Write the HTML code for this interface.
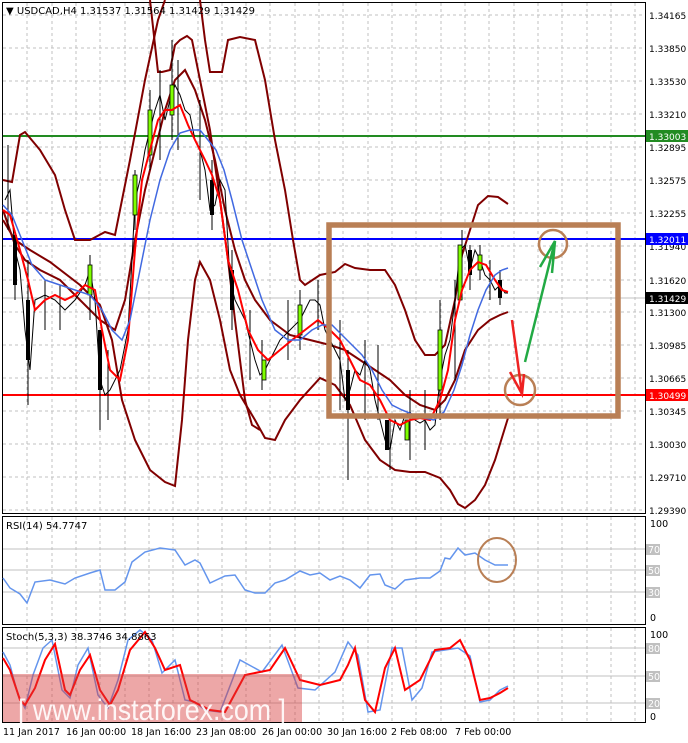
<!DOCTYPE html>
<html><head><meta charset="utf-8"><style>
html,body{margin:0;padding:0;background:#fff;}
svg{display:block;font-family:Tahoma,"DejaVu Sans",sans-serif;}
</style></head><body>
<svg width="688" height="743" viewBox="0 0 688 743" xmlns="http://www.w3.org/2000/svg">
<rect width="688" height="743" fill="#fff"/>
<g stroke="#c0c0c0" stroke-dasharray="3,3" stroke-width="1">
<path d="M27 3V513M52 3V513M76 3V513M100 3V513M125 3V513M149 3V513M173 3V513M198 3V513M222 3V513M246 3V513M270 3V513M295 3V513M319 3V513M343 3V513M368 3V513M392 3V513M416 3V513M441 3V513M465 3V513M489 3V513M514 3V513M538 3V513M562 3V513M587 3V513M611 3V513M635 3V513"/>
<path d="M27 517V624M52 517V624M76 517V624M100 517V624M125 517V624M149 517V624M173 517V624M198 517V624M222 517V624M246 517V624M270 517V624M295 517V624M319 517V624M343 517V624M368 517V624M392 517V624M416 517V624M441 517V624M465 517V624M489 517V624M514 517V624M538 517V624M562 517V624M587 517V624M611 517V624M635 517V624"/>
<path d="M27 628V722M52 628V722M76 628V722M100 628V722M125 628V722M149 628V722M173 628V722M198 628V722M222 628V722M246 628V722M270 628V722M295 628V722M319 628V722M343 628V722M368 628V722M392 628V722M416 628V722M441 628V722M465 628V722M489 628V722M514 628V722M538 628V722M562 628V722M587 628V722M611 628V722M635 628V722"/>
<path d="M3 15H645M3 48H645M3 81H645M3 114H645M3 147H645M3 180H645M3 213H645M3 246H645M3 280H645M3 312H645M3 345H645M3 378H645M3 411H645M3 444H645M3 477H645M3 510H645"/>
</g>
<g fill="none" stroke="#000" stroke-width="1">
<rect x="2.5" y="2.5" width="643" height="511"/>
<rect x="2.5" y="516.5" width="643" height="108"/>
<rect x="2.5" y="627.5" width="643" height="95"/>
</g>
<g stroke="#c0c0c0" stroke-width="1">
<path d="M3 549H645M3 570H645M3 592H645"/>
<path d="M3 648H645M3 676H645M3 703H645"/>
</g>
<path d="M3 136H645" stroke="#228b22" stroke-width="2"/>
<path d="M3 239H645" stroke="#0000ff" stroke-width="2"/>
<path d="M3 395H645" stroke="#ff0000" stroke-width="2"/>
<path d="M3 298H645" stroke="#c0c0c0" stroke-width="1"/>
<g fill="none" stroke="#800000" stroke-width="2">
<polyline points="3,180 12,182 20,135 25,132 40,150 55,175 65,210 75,240 90,240 105,232 115,235 130,160 145,80 158,20 165,0"/>
<polyline points="150,0 158,72 162,72 170,70 175,45 180,40 187,36 192,40 200,80 210,130 220,200 228,260 235,320 245,400 252,425 260,430"/>
<polyline points="200,0 205,40 210,72 222,72 228,40 240,37 255,40 265,80 275,140 285,190 293,240 300,280 305,285 320,275 335,272 345,264 355,268 370,270 385,270 395,285 405,310 415,340 425,355 435,355 445,345 455,300 462,255 470,230 478,205 488,196 498,197 508,204"/>
<polyline points="3,220 15,240 30,250 50,262 80,285 100,305 112,340 122,400 135,440 150,470 165,482 175,486 182,420 188,340 195,280 200,262 210,280 220,320 230,370 240,395 255,420 265,438 275,440 285,420 300,400 320,378 335,385 350,405 365,440 380,460 395,470 410,472 425,472 440,478 450,490 458,504 465,508 475,500 485,485 495,460 508,418"/>
<polyline points="3,210 15,245 25,260 40,270 60,280 80,300 100,320 115,330 125,300 135,240 145,190 155,150 165,110 175,80 185,70 195,90 205,120 215,160 225,210 235,250 245,280 255,300 270,320 290,335 310,340 330,345 345,350 360,360 375,370 390,380 405,395 420,405 435,410 445,400 455,380 465,350 478,330 490,320 500,315 508,312"/>
</g>
<g stroke="#000" stroke-width="1" fill="none">
<polyline points="5,200 10,190 15,250 20,270 25,330 30,370 35,300 45,295 55,300 65,310 75,300 85,285 90,270 95,300 100,380 105,395 110,390 120,370 128,330 132,260 135,200 140,180 145,150 150,130 155,110 160,95 165,120 170,100 175,85 180,95 185,110 190,115 195,140 200,150 205,170 210,210 215,205 220,180 225,190 230,280 235,300 240,310 245,320 250,340 255,360 260,375 265,370 270,360 280,340 290,330 300,320 305,310 310,300 315,300 320,305 325,330 330,340 335,350 340,360 345,400 350,390 355,370 360,375 365,360 370,370 375,400 380,420 385,440 390,450 395,420 400,430 405,415 410,412 415,420 420,423 425,420 430,430 435,425 440,380 445,355 450,340 455,300 460,250 465,245 470,270 475,250 480,260 485,275 490,280 495,290 500,285 505,293 508,293"/>
</g>
<g stroke="#000" stroke-width="1">
<path d="M8 145V230M15 230V300M28 260V405M45 280V330M60 285V330M90 255V320M100 360V430M108 350V420M135 170V230M150 90V170M160 70V160M172 40V140M178 60V150M200 100V200M212 160V230M232 250V330M250 310V380M262 340V390M288 300V360M300 290V350M318 280V330M340 320V410M348 350V480M365 340V420M378 345V420M390 420V470M410 390V460M425 390V450M440 300V420M455 280V380M462 230V300M470 245V290M480 245V280M490 260V300M500 270V305"/>
</g>
<g fill="#7fff00" stroke="#000" stroke-width="0.8">
<rect x="133" y="175" width="4" height="40"/><rect x="148" y="110" width="4" height="45"/><rect x="170" y="85" width="4" height="30"/><rect x="88" y="265" width="4" height="30"/><rect x="298" y="305" width="4" height="30"/><rect x="438" y="330" width="4" height="60"/><rect x="458" y="245" width="4" height="55"/><rect x="478" y="255" width="4" height="15"/><rect x="405" y="420" width="4" height="20"/><rect x="262" y="360" width="4" height="20"/>
</g>
<g fill="#000">
<rect x="13" y="235" width="4" height="50"/><rect x="26" y="300" width="4" height="60"/><rect x="98" y="330" width="4" height="60"/><rect x="210" y="180" width="4" height="35"/><rect x="230" y="270" width="4" height="40"/><rect x="346" y="370" width="4" height="40"/><rect x="385" y="420" width="4" height="30"/><rect x="468" y="250" width="4" height="25"/><rect x="498" y="280" width="4" height="18"/>
</g>
<polyline fill="none" stroke="#ff0000" stroke-width="2" points="3,210 10,215 20,250 28,280 35,310 45,300 55,295 65,300 75,295 85,285 95,290 102,330 110,370 120,380 128,340 135,250 142,180 150,150 158,120 165,110 172,110 180,105 188,125 195,140 205,160 212,175 220,200 228,260 238,290 248,330 258,350 268,360 280,350 292,340 305,330 318,320 330,330 340,340 350,360 360,380 370,385 380,400 390,420 400,425 410,420 420,418 430,420 440,400 448,370 455,320 462,290 470,270 478,262 486,265 495,280 502,290 508,292"/>
<polyline fill="none" stroke="#4169e1" stroke-width="1.5" points="3,205 12,215 22,240 32,265 45,280 60,285 75,290 90,295 102,310 112,330 122,340 130,320 140,270 150,220 160,180 170,150 180,133 190,130 200,130 208,140 216,150 224,170 232,200 242,240 252,270 262,300 275,330 288,340 300,340 312,330 322,325 332,325 342,335 352,345 362,355 372,370 382,390 392,405 402,410 414,415 424,418 434,420 444,412 454,390 462,365 470,335 478,310 486,290 495,275 502,270 508,268"/>
<rect x="329" y="225" width="289" height="191" fill="none" stroke="#b97f55" stroke-width="5.5"/>
<circle cx="553" cy="244" r="14" fill="none" stroke="#b97f55" stroke-width="2.5"/>
<circle cx="520" cy="390" r="15" fill="none" stroke="#b97f55" stroke-width="2.5"/>
<g stroke="#22aa44" stroke-width="2.5" fill="none"><path d="M525 362L555 241M540 267L555 241L552 273"/></g>
<g stroke="#ee2222" stroke-width="2.5" fill="none"><path d="M512 320L522 394M510 372L522 394L524 374"/></g>
<polyline fill="none" stroke="#6495ed" stroke-width="1.5" points="3,578 10,588 20,594 27,603 35,582 50,580 65,584 75,578 90,573 100,570 105,590 115,590 125,582 132,562 145,552 160,548 175,550 185,565 195,560 200,563 210,583 225,576 235,575 245,590 255,593 265,593 275,583 285,580 300,571 310,575 320,573 330,580 340,576 350,580 360,588 370,575 380,574 385,585 395,589 405,580 420,578 430,578 440,571 445,558 450,559 458,548 465,555 475,553 485,560 495,565 508,565"/>
<ellipse cx="497" cy="560" rx="19" ry="22" fill="none" stroke="#b97f55" stroke-width="2"/>
<polyline fill="none" stroke="#6495ed" stroke-width="1.5" points="3,652 10,665 18,695 25,708 33,675 43,648 52,640 62,690 70,698 78,665 88,648 98,695 108,708 118,680 128,640 140,630 152,640 162,673 175,660 185,700 195,702 205,710 220,712 240,660 262,672 282,645 298,688 315,690 335,672 348,642 358,655 368,712 380,710 392,648 402,648 412,700 422,688 432,652 445,650 458,648 470,656 480,702 490,700 500,690 508,686"/>
<polyline fill="none" stroke="#ff0000" stroke-width="2" points="3,658 10,670 20,700 25,705 35,688 45,660 55,644 65,690 70,695 80,670 90,655 100,690 110,705 118,690 130,650 145,632 155,648 165,670 180,665 190,700 200,705 210,710 225,712 245,675 270,670 285,648 300,680 320,685 340,680 348,665 355,648 365,700 375,712 385,668 395,648 405,690 420,680 435,650 450,648 460,640 470,660 480,700 490,698 500,693 508,688"/>
<rect x="3" y="674" width="299" height="48" fill="rgba(215,60,60,0.45)"/>
<text x="18" y="720" font-family="Liberation Sans,sans-serif" font-size="30" fill="#fff" fill-opacity="0.9" textLength="268" lengthAdjust="spacingAndGlyphs">[ www.instaforex.com ]</text>
<text x="6" y="14" font-size="10" fill="#000">▼ USDCAD,H4  1.31537 1.31564 1.31429 1.31429</text>
<text x="6" y="529" font-size="10" fill="#000">RSI(14) 54.7747</text>
<text x="6" y="640" font-size="10" fill="#000">Stoch(5,3,3) 38.3746 34.8863</text>
<g font-size="9" fill="#000">
<text x="649" y="19">1.34165</text><text x="649" y="52">1.33850</text><text x="649" y="85">1.33530</text><text x="649" y="118">1.33210</text><text x="649" y="151">1.32895</text><text x="649" y="184">1.32575</text><text x="649" y="217">1.32255</text><text x="649" y="250">1.31940</text><text x="649" y="284">1.31620</text><text x="649" y="316">1.31300</text><text x="649" y="349">1.30985</text><text x="649" y="382">1.30665</text><text x="649" y="415">1.30345</text><text x="649" y="448">1.30030</text><text x="649" y="481">1.29710</text><text x="649" y="514">1.29390</text>
</g>
<rect x="646" y="130" width="42" height="12" fill="#228b22"/><text x="649" y="140" font-size="9" fill="#fff">1.33003</text>
<rect x="646" y="233" width="42" height="12" fill="#0000ff"/><text x="649" y="243" font-size="9" fill="#fff">1.32011</text>
<rect x="646" y="292" width="42" height="12" fill="#000"/><text x="649" y="302" font-size="9" fill="#fff">1.31429</text>
<rect x="646" y="389" width="42" height="12" fill="#ff0000"/><text x="649" y="399" font-size="9" fill="#fff">1.30499</text>
<g font-size="9.5" fill="#000"><text x="650" y="527">100</text><text x="650" y="621">0</text><text x="650" y="638">100</text><text x="650" y="720">0</text></g>
<g font-size="9.5" fill="#fff">
<rect x="646" y="544" width="14" height="11" fill="#c0c0c0"/><text x="648" y="553">70</text>
<rect x="646" y="565" width="14" height="11" fill="#c0c0c0"/><text x="648" y="574">50</text>
<rect x="646" y="587" width="14" height="11" fill="#c0c0c0"/><text x="648" y="596">30</text>
<rect x="646" y="643" width="14" height="11" fill="#c0c0c0"/><text x="648" y="652">80</text>
<rect x="646" y="671" width="14" height="11" fill="#c0c0c0"/><text x="648" y="680">50</text>
<rect x="646" y="698" width="14" height="11" fill="#c0c0c0"/><text x="648" y="707">20</text>
</g>
<g font-size="9.5" fill="#000">
<text x="3" y="735">11 Jan 2017</text><text x="66" y="735">16 Jan 00:00</text><text x="131" y="735">18 Jan 16:00</text><text x="196" y="735">23 Jan 08:00</text><text x="262" y="735">26 Jan 00:00</text><text x="327" y="735">30 Jan 16:00</text><text x="391" y="735">2 Feb 08:00</text><text x="455" y="735">7 Feb 00:00</text>
</g>
</svg>
</body></html>
